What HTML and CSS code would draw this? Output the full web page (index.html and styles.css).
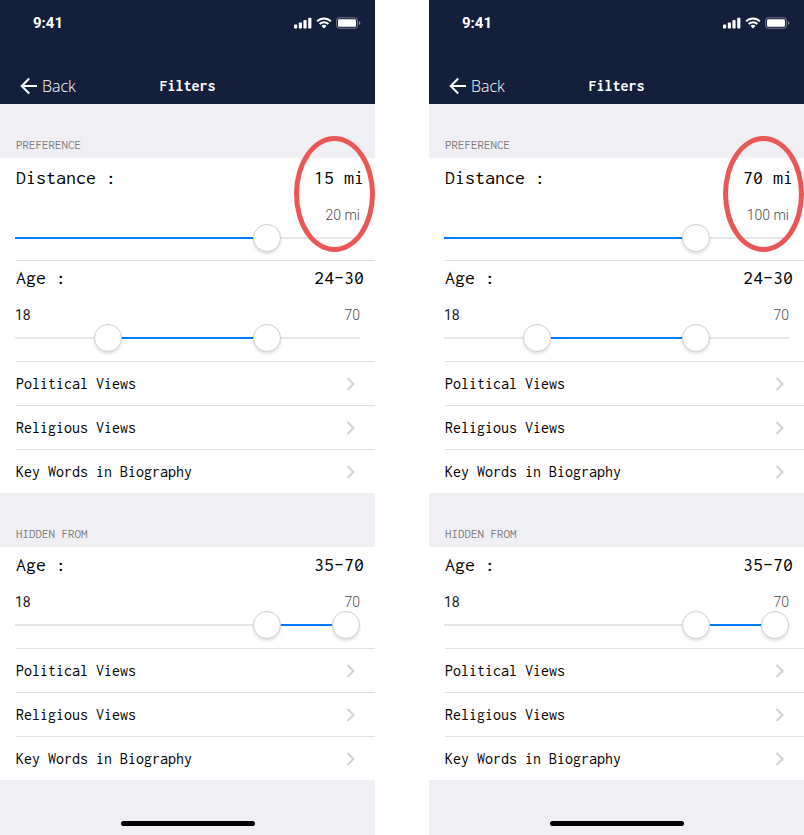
FILE: index.html
```
<!DOCTYPE html>
<html lang="en">
<head>
<meta charset="utf-8">
<meta name="viewport" content="width=device-width, initial-scale=1">
<title>Filters</title>
<link rel="stylesheet" href="styles.css">
</head>
<body>
<svg class="sprite" aria-hidden="true">
  <symbol id="signal" viewBox="0 0 18 12">
    <rect x="0" y="7.5" width="3.2" height="4" rx="0.8"/>
    <rect x="4.8" y="5.5" width="3.2" height="6" rx="0.8"/>
    <rect x="9.4" y="3" width="3.2" height="8.5" rx="0.8"/>
    <rect x="14.2" y="0.7" width="3.2" height="10.8" rx="0.8"/>
  </symbol>
  <symbol id="wifi" viewBox="0 0 16 12">
    <path fill="none" stroke="currentColor" stroke-width="1.9" d="M1.1 4.3a9.8 9.8 0 0 1 13.8 0M3.6 7a6.3 6.3 0 0 1 8.8 0"/>
    <path d="M8 11.4 5.5 8.9a3.6 3.6 0 0 1 5 0z"/>
  </symbol>
  <symbol id="battery" viewBox="0 0 25 12">
    <rect x="0.5" y="0.8" width="21" height="10.4" rx="2.6" fill="none" stroke="currentColor" opacity="0.4"/>
    <rect x="2" y="2.3" width="18" height="7.4" rx="1.3"/>
    <path d="M23 4.2v3.8c.8-.3 1.3-1 1.3-1.9s-.5-1.600-1.3-1.900z" opacity="0.5"/>
  </symbol>
  <symbol id="arrow" viewBox="0 0 18 18">
    <path fill="none" stroke="currentColor" stroke-width="2" d="M17 9H2.500M9.200 1.500 1.700 9l7.500 7.500"/>
  </symbol>
  <symbol id="chevron" viewBox="0 0 10 14">
    <path fill="none" stroke="currentColor" stroke-width="2" d="M1.500 1 7.500 7l-6 6"/>
  </symbol>
</svg>

<main class="screens">
  <section class="phone" aria-label="Filters, 20 mile range">
    <header class="top">
      <div class="status">
        <span class="time">9:41</span>
        <span class="status-icons">
          <svg class="i-signal"><use href="#signal"/></svg>
          <svg class="i-wifi"><use href="#wifi"/></svg>
          <svg class="i-battery"><use href="#battery"/></svg>
        </span>
      </div>
      <nav class="nav">
        <a class="back" href="#"><svg class="i-arrow"><use href="#arrow"/></svg>Back</a>
        <h1 class="title">Filters</h1>
      </nav>
    </header>

    <h2 class="group-title">PREFERENCE</h2>
    <div class="group">
      <div class="setting distance">
        <div class="setting-head"><label for="a-distance">Distance :</label><output for="a-distance">15 mi</output></div>
        <div class="bounds"><span></span><span class="max">20 mi</span></div>
        <div class="slider" style="--from:0%;--to:75%">
          <input id="a-distance" type="range" min="0" max="20" value="15">
        </div>
        <span class="ring"></span>
      </div>
      <div class="setting">
        <div class="setting-head"><label for="a-age-min">Age :</label><output for="a-age-min a-age-max">24–30</output></div>
        <div class="bounds"><span>18</span><span class="max">70</span></div>
        <div class="slider" style="--from:25%;--to:75%">
          <input id="a-age-min" type="range" min="18" max="70" value="31">
          <input id="a-age-max" type="range" min="18" max="70" value="57" aria-label="Maximum age">
        </div>
      </div>
      <a class="row" href="#">Political Views<svg class="i-chevron"><use href="#chevron"/></svg></a>
      <a class="row" href="#">Religious Views<svg class="i-chevron"><use href="#chevron"/></svg></a>
      <a class="row" href="#">Key Words in Biography<svg class="i-chevron"><use href="#chevron"/></svg></a>
    </div>

    <h2 class="group-title">HIDDEN FROM</h2>
    <div class="group">
      <div class="setting">
        <div class="setting-head"><label for="a-hide-min">Age :</label><output for="a-hide-min a-hide-max">35–70</output></div>
        <div class="bounds"><span>18</span><span class="max">70</span></div>
        <div class="slider" style="--from:75%;--to:100%">
          <input id="a-hide-min" type="range" min="18" max="70" value="57">
          <input id="a-hide-max" type="range" min="18" max="70" value="70" aria-label="Maximum hidden age">
        </div>
      </div>
      <a class="row" href="#">Political Views<svg class="i-chevron"><use href="#chevron"/></svg></a>
      <a class="row" href="#">Religious Views<svg class="i-chevron"><use href="#chevron"/></svg></a>
      <a class="row" href="#">Key Words in Biography<svg class="i-chevron"><use href="#chevron"/></svg></a>
    </div>
    <footer class="home"><span class="home-bar"></span></footer>
  </section>

  <section class="phone" aria-label="Filters, 100 mile range">
    <header class="top">
      <div class="status">
        <span class="time">9:41</span>
        <span class="status-icons">
          <svg class="i-signal"><use href="#signal"/></svg>
          <svg class="i-wifi"><use href="#wifi"/></svg>
          <svg class="i-battery"><use href="#battery"/></svg>
        </span>
      </div>
      <nav class="nav">
        <a class="back" href="#"><svg class="i-arrow"><use href="#arrow"/></svg>Back</a>
        <h1 class="title">Filters</h1>
      </nav>
    </header>

    <h2 class="group-title">PREFERENCE</h2>
    <div class="group">
      <div class="setting distance">
        <div class="setting-head"><label for="b-distance">Distance :</label><output for="b-distance">70 mi</output></div>
        <div class="bounds"><span></span><span class="max">100 mi</span></div>
        <div class="slider" style="--from:0%;--to:75%">
          <input id="b-distance" type="range" min="0" max="100" value="75">
        </div>
        <span class="ring"></span>
      </div>
      <div class="setting">
        <div class="setting-head"><label for="b-age-min">Age :</label><output for="b-age-min b-age-max">24–30</output></div>
        <div class="bounds"><span>18</span><span class="max">70</span></div>
        <div class="slider" style="--from:25%;--to:75%">
          <input id="b-age-min" type="range" min="18" max="70" value="31">
          <input id="b-age-max" type="range" min="18" max="70" value="57" aria-label="Maximum age">
        </div>
      </div>
      <a class="row" href="#">Political Views<svg class="i-chevron"><use href="#chevron"/></svg></a>
      <a class="row" href="#">Religious Views<svg class="i-chevron"><use href="#chevron"/></svg></a>
      <a class="row" href="#">Key Words in Biography<svg class="i-chevron"><use href="#chevron"/></svg></a>
    </div>

    <h2 class="group-title">HIDDEN FROM</h2>
    <div class="group">
      <div class="setting">
        <div class="setting-head"><label for="b-hide-min">Age :</label><output for="b-hide-min b-hide-max">35–70</output></div>
        <div class="bounds"><span>18</span><span class="max">70</span></div>
        <div class="slider" style="--from:75%;--to:100%">
          <input id="b-hide-min" type="range" min="18" max="70" value="57">
          <input id="b-hide-max" type="range" min="18" max="70" value="70" aria-label="Maximum hidden age">
        </div>
      </div>
      <a class="row" href="#">Political Views<svg class="i-chevron"><use href="#chevron"/></svg></a>
      <a class="row" href="#">Religious Views<svg class="i-chevron"><use href="#chevron"/></svg></a>
      <a class="row" href="#">Key Words in Biography<svg class="i-chevron"><use href="#chevron"/></svg></a>
    </div>
    <footer class="home"><span class="home-bar"></span></footer>
  </section>
</main>
</body>
</html>
```
FILE: styles.css
```
* {
  box-sizing: border-box;
}

body {
  margin: 0;
  background: #fff;
  color: #000;
  font-family: Inconsolata, "Liberation Mono", monospace;
}

a {
  color: inherit;
  text-decoration: none;
}

svg {
  display: block;
  fill: currentColor;
}

.sprite {
  display: none;
}

.screens {
  display: grid;
  grid-template-columns: 1fr 1fr;
  gap: 54px;
  min-height: 100vh;
}

.phone {
  display: flex;
  flex-direction: column;
  background: #efeff4;
}

/* Status and navigation bars */
.top {
  background: #141f3c;
  color: #fff;
}

.status {
  display: flex;
  align-items: center;
  justify-content: space-between;
  height: 46px;
  padding: 0 14px 0 33px;
}

.time {
  font: 700 15px/20px Roboto, sans-serif;
}

.status-icons {
  display: flex;
  align-items: center;
  gap: 4px;
}

.i-signal {
  width: 18px;
  height: 12px;
}

.i-wifi {
  width: 16px;
  height: 12px;
}

.i-battery {
  width: 25px;
  height: 12px;
}

.nav {
  display: grid;
  grid-template-columns: 1fr auto 1fr;
  align-items: center;
  height: 58px;
  padding: 22px 20px 0;
}

.back {
  display: flex;
  align-items: center;
  gap: 4px;
  font: 300 16px/24px "Open Sans", sans-serif;
}

.i-arrow {
  width: 18px;
  height: 18px;
}

.title {
  margin: 0;
  font-size: 16px;
  line-height: 24px;
  font-weight: 700;
}

/* Groups */
.group-title {
  height: 54px;
  margin: 0;
  padding: 31px 16px 0;
  color: #7c7c80;
  font-size: 13px;
  line-height: 20px;
  font-weight: 400;
}

.group {
  background: #fff;
}

.setting,
.row {
  position: relative;
}

.setting + .setting,
.row {
  background: linear-gradient(#e0e0e2, #e0e0e2) 16px 0 / 100% 1px no-repeat;
}

.setting {
  padding: 0 15px 9px;
}

.distance {
  padding-top: 2px;
  padding-bottom: 8px;
}

.setting-head {
  display: flex;
  align-items: center;
  justify-content: space-between;
  height: 36px;
  margin-right: -4px;
  padding-left: 1px;
  font-size: 20px;
  line-height: 24px;
}

.bounds {
  display: flex;
  justify-content: space-between;
  padding-top: 10px;
  color: #1c1c1e;
  font: 400 14px/18px Roboto, sans-serif;
}

.max {
  color: #4a4a50;
  font-weight: 300;
}

/* Stacked range inputs share one drawn track */
.slider {
  display: grid;
  height: 28px;
  background:
    linear-gradient(to right, #e5e5ea var(--from), #007aff var(--from), #007aff var(--to), #e5e5ea var(--to)) center / 100% 2px no-repeat;
}

.slider input {
  grid-area: 1 / 1;
  width: 100%;
  height: 28px;
  margin: 0;
  background: none;
  pointer-events: none;
  appearance: none;
}

.slider input::-webkit-slider-thumb {
  width: 28px;
  height: 28px;
  border: 1px solid #d0d0d2;
  border-radius: 50%;
  background: #fff;
  box-shadow: 0 2px 3px rgba(0, 0, 0, 0.12);
  pointer-events: auto;
  appearance: none;
}

.ring {
  position: absolute;
  top: -22px;
  right: 0;
  width: 81px;
  height: 116px;
  border: 5px solid #eb5757;
  border-radius: 50%;
  pointer-events: none;
}

.row {
  display: flex;
  align-items: center;
  justify-content: space-between;
  height: 44px;
  padding: 2px 19px 0 16px;
  font-size: 16px;
  line-height: 20px;
}

.i-chevron {
  width: 10px;
  height: 14px;
  color: #d1d1d6;
}

/* Home indicator */
.home {
  display: flex;
  justify-content: center;
  margin-top: auto;
  padding: 8px 0 9px;
}

.home-bar {
  width: 134px;
  height: 5px;
  border-radius: 3px;
  background: #000;
}
```
